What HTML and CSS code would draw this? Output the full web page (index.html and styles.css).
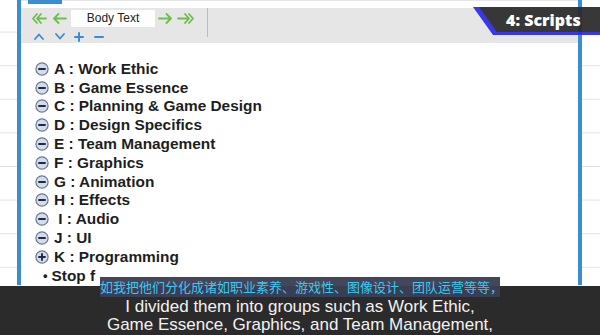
FILE: index.html
```html
<!DOCTYPE html>
<html lang="en">
<head>
<meta charset="utf-8">
<title>Scripts</title>
<link rel="stylesheet" href="styles.css">
</head>
<body>
<div class="stage">
  <div class="panel">
    <div class="tabstrip"><span class="tab"></span></div>
    <div class="toolbar">
      <div class="tools">
        <div class="row1">
          <svg class="ic dbl" width="15" height="11" viewBox="0 0 15 11"><path d="M5 1 L1 5.5 L5 10 M9 1 L5 5.5 L9 10 M5 5.5 H14" fill="none" stroke="#6dbf4b" stroke-width="1.8" stroke-linecap="round" stroke-linejoin="round"/></svg>
          <svg class="ic sgl" width="14" height="11" viewBox="0 0 14 11"><path d="M5.5 1 L1 5.5 L5.5 10 M1 5.5 H13" fill="none" stroke="#6dbf4b" stroke-width="1.8" stroke-linecap="round" stroke-linejoin="round"/></svg>
          <span class="style-box">Body Text</span>
          <svg class="ic sgr" width="14" height="11" viewBox="0 0 14 11"><path d="M8.5 1 L13 5.5 L8.5 10 M1 5.5 H13" fill="none" stroke="#6dbf4b" stroke-width="1.8" stroke-linecap="round" stroke-linejoin="round"/></svg>
          <svg class="ic dbr" width="17" height="11" viewBox="0 0 17 11"><path d="M8 1 L12 5.5 L8 10 M12 1 L16 5.5 L12 10 M1 5.5 H12" fill="none" stroke="#6dbf4b" stroke-width="1.8" stroke-linecap="round" stroke-linejoin="round"/></svg>
        </div>
        <div class="row2">
          <svg class="ic up" width="10" height="7" viewBox="0 0 10 7"><path d="M1 6 L5 1.5 L9 6" fill="none" stroke="#3b8dd3" stroke-width="1.8" stroke-linecap="round" stroke-linejoin="round"/></svg>
          <svg class="ic down" width="10" height="7" viewBox="0 0 10 7"><path d="M1 1 L5 5.5 L9 1" fill="none" stroke="#3b8dd3" stroke-width="1.8" stroke-linecap="round" stroke-linejoin="round"/></svg>
          <svg class="ic plus" width="10" height="10" viewBox="0 0 10 10"><path d="M5 1 V9 M1 5 H9" fill="none" stroke="#3b8dd3" stroke-width="2" stroke-linecap="round"/></svg>
          <svg class="ic minus" width="10" height="10" viewBox="0 0 10 10"><path d="M1 5 H9" fill="none" stroke="#3b8dd3" stroke-width="2" stroke-linecap="round"/></svg>
        </div>
      </div>
      <span class="sep"></span>
    </div>
    <ul class="outline">
      <li><svg class="tog" width="14" height="14" viewBox="0 0 14 14"><circle cx="7" cy="7" r="6.1" fill="#d3dcec" stroke="#6a7893" stroke-width="1.2"/><path d="M4 7 H10" stroke="#1f2a3f" stroke-width="1.9" stroke-linecap="round"/></svg><span>A : Work Ethic</span></li>
      <li><svg class="tog" width="14" height="14" viewBox="0 0 14 14"><circle cx="7" cy="7" r="6.1" fill="#d3dcec" stroke="#6a7893" stroke-width="1.2"/><path d="M4 7 H10" stroke="#1f2a3f" stroke-width="1.9" stroke-linecap="round"/></svg><span>B : Game Essence</span></li>
      <li><svg class="tog" width="14" height="14" viewBox="0 0 14 14"><circle cx="7" cy="7" r="6.1" fill="#d3dcec" stroke="#6a7893" stroke-width="1.2"/><path d="M4 7 H10" stroke="#1f2a3f" stroke-width="1.9" stroke-linecap="round"/></svg><span>C : Planning &amp; Game Design</span></li>
      <li><svg class="tog" width="14" height="14" viewBox="0 0 14 14"><circle cx="7" cy="7" r="6.1" fill="#d3dcec" stroke="#6a7893" stroke-width="1.2"/><path d="M4 7 H10" stroke="#1f2a3f" stroke-width="1.9" stroke-linecap="round"/></svg><span>D : Design Specifics</span></li>
      <li><svg class="tog" width="14" height="14" viewBox="0 0 14 14"><circle cx="7" cy="7" r="6.1" fill="#d3dcec" stroke="#6a7893" stroke-width="1.2"/><path d="M4 7 H10" stroke="#1f2a3f" stroke-width="1.9" stroke-linecap="round"/></svg><span>E : Team Management</span></li>
      <li><svg class="tog" width="14" height="14" viewBox="0 0 14 14"><circle cx="7" cy="7" r="6.1" fill="#d3dcec" stroke="#6a7893" stroke-width="1.2"/><path d="M4 7 H10" stroke="#1f2a3f" stroke-width="1.9" stroke-linecap="round"/></svg><span>F : Graphics</span></li>
      <li><svg class="tog" width="14" height="14" viewBox="0 0 14 14"><circle cx="7" cy="7" r="6.1" fill="#d3dcec" stroke="#6a7893" stroke-width="1.2"/><path d="M4 7 H10" stroke="#1f2a3f" stroke-width="1.9" stroke-linecap="round"/></svg><span>G : Animation</span></li>
      <li><svg class="tog" width="14" height="14" viewBox="0 0 14 14"><circle cx="7" cy="7" r="6.1" fill="#d3dcec" stroke="#6a7893" stroke-width="1.2"/><path d="M4 7 H10" stroke="#1f2a3f" stroke-width="1.9" stroke-linecap="round"/></svg><span>H : Effects</span></li>
      <li><svg class="tog" width="14" height="14" viewBox="0 0 14 14"><circle cx="7" cy="7" r="6.1" fill="#d3dcec" stroke="#6a7893" stroke-width="1.2"/><path d="M4 7 H10" stroke="#1f2a3f" stroke-width="1.9" stroke-linecap="round"/></svg><span>&nbsp;I : Audio</span></li>
      <li><svg class="tog" width="14" height="14" viewBox="0 0 14 14"><circle cx="7" cy="7" r="6.1" fill="#d3dcec" stroke="#6a7893" stroke-width="1.2"/><path d="M4 7 H10" stroke="#1f2a3f" stroke-width="1.9" stroke-linecap="round"/></svg><span>J : UI</span></li>
      <li><svg class="tog" width="14" height="14" viewBox="0 0 14 14"><circle cx="7" cy="7" r="6.1" fill="#d3dcec" stroke="#6a7893" stroke-width="1.2"/><path d="M4 7 H10 M7 4 V10" stroke="#1f2a3f" stroke-width="1.9" stroke-linecap="round"/></svg><span>K : Programming</span></li>
      <li class="sub"><span class="dot">•</span><span>Stop f</span></li>
    </ul>
  </div>
</div>

<div class="badge">
  <svg class="badge-bg" width="127" height="28" viewBox="0 0 127 28"><polygon points="0,0 127,0 127,28 20,28" fill="#2b2be6"/><polygon points="6,0 127,0 127,25 24,25" fill="#2a2a2a"/></svg>
  <span class="badge-text">4: Scripts</span>
</div>

<div class="subtitles">
  <div class="zh">如我把他们分化成诸如职业素养、游戏性、图像设计、团队运营等等，</div>
  <div class="en">I divided them into groups such as Work Ethic,<br>Game Essence, Graphics, and Team Management,</div>
</div>
</body>
</html>
```

FILE: styles.css
```css
html, body {
  margin: 0;
  padding: 0;
}
body {
  width: 600px;
  height: 335px;
  overflow: hidden;
  position: relative;
  background-color: #ffffff;
  background-image: linear-gradient(to bottom, transparent 32px, #e3e3e3 32px, #e3e3e3 33px, transparent 33px);
  background-size: 100% 33.6px;
  background-repeat: repeat-y;
  font-family: "Liberation Sans", Arial, sans-serif;
}
.stage {
  display: flex;
  height: 286px;
}
.panel {
  margin-left: 17px;
  width: 565px;
  height: 285px;
  box-sizing: border-box;
  border-left: 4px solid #3a8dcf;
  border-right: 4px solid #3a8dcf;
  background: #ffffff;
  display: flex;
  flex-direction: column;
}
.tabstrip {
  height: 8px;
  border-top: 1px solid #e6e6e6;
  box-sizing: border-box;
}
.tab {
  display: block;
  margin-left: 7px;
  margin-top: -1px;
  width: 34px;
  height: 4px;
  background: #3a8dcf;
}
.toolbar {
  height: 37px;
  background: #e6e6e6;
  display: flex;
  align-items: flex-start;
}
.tools {
  width: 186px;
  display: flex;
  flex-direction: column;
}
.row1 {
  display: flex;
  align-items: center;
  height: 17px;
  margin-top: 2px;
  padding-left: 11px;
}
.ic { display: block; flex: none; }
.sgl { margin-left: 6px; }
.style-box {
  margin-left: 4px;
  width: 84px;
  height: 17px;
  background: #ffffff;
  font-size: 12px;
  color: #222;
  display: flex;
  align-items: center;
  justify-content: center;
  border-radius: 1px;
}
.sgr { margin-left: 3px; }
.dbr { margin-left: 5px; }
.row2 {
  display: flex;
  align-items: center;
  height: 12px;
  margin-top: 4px;
  padding-left: 13px;
}
.down { margin-left: 11px; }
.plus { margin-left: 9px; }
.minus { margin-left: 10px; }
.sep {
  width: 1px;
  height: 29px;
  background: #bdbdbd;
}
.outline {
  list-style: none;
  margin: 0;
  padding: 16px 0 0 14px;
}
.outline li {
  display: flex;
  align-items: center;
  height: 18.8px;
  font-size: 15.4px;
  font-weight: bold;
  color: #1e1e1e;
  white-space: nowrap;
}
.tog {
  flex: none;
  margin-right: 5px;
}
.outline li.sub {
  padding-left: 8px;
}
.dot {
  margin-right: 4px;
  font-size: 13px;
}
.badge {
  position: absolute;
  left: 473px;
  top: 7px;
  width: 127px;
  height: 28px;
}
.badge-bg {
  display: block;
  opacity: 0.93;
}
.badge-text {
  position: absolute;
  left: 33px;
  top: 3px;
  color: #ffffff;
  font-family: "Open Sans", sans-serif;
  font-weight: 800;
  font-size: 16px;
  line-height: 20px;
}
.subtitles {
  position: absolute;
  left: 0;
  top: 286px;
  width: 600px;
  height: 49px;
  background: #2b2b2b;
}
.zh {
  position: absolute;
  left: 100px;
  top: -9px;
  width: 400px;
  height: 20px;
  background: rgba(58, 64, 84, 0.96);
  color: #3cc8f0;
  font-family: "Noto Sans CJK SC", sans-serif;
  font-size: 13px;
  line-height: 20px;
  text-align: center;
  white-space: nowrap;
}
.en {
  padding-top: 12px;
  color: #f2f2f2;
  font-size: 17px;
  line-height: 18px;
  text-align: center;
}
```
